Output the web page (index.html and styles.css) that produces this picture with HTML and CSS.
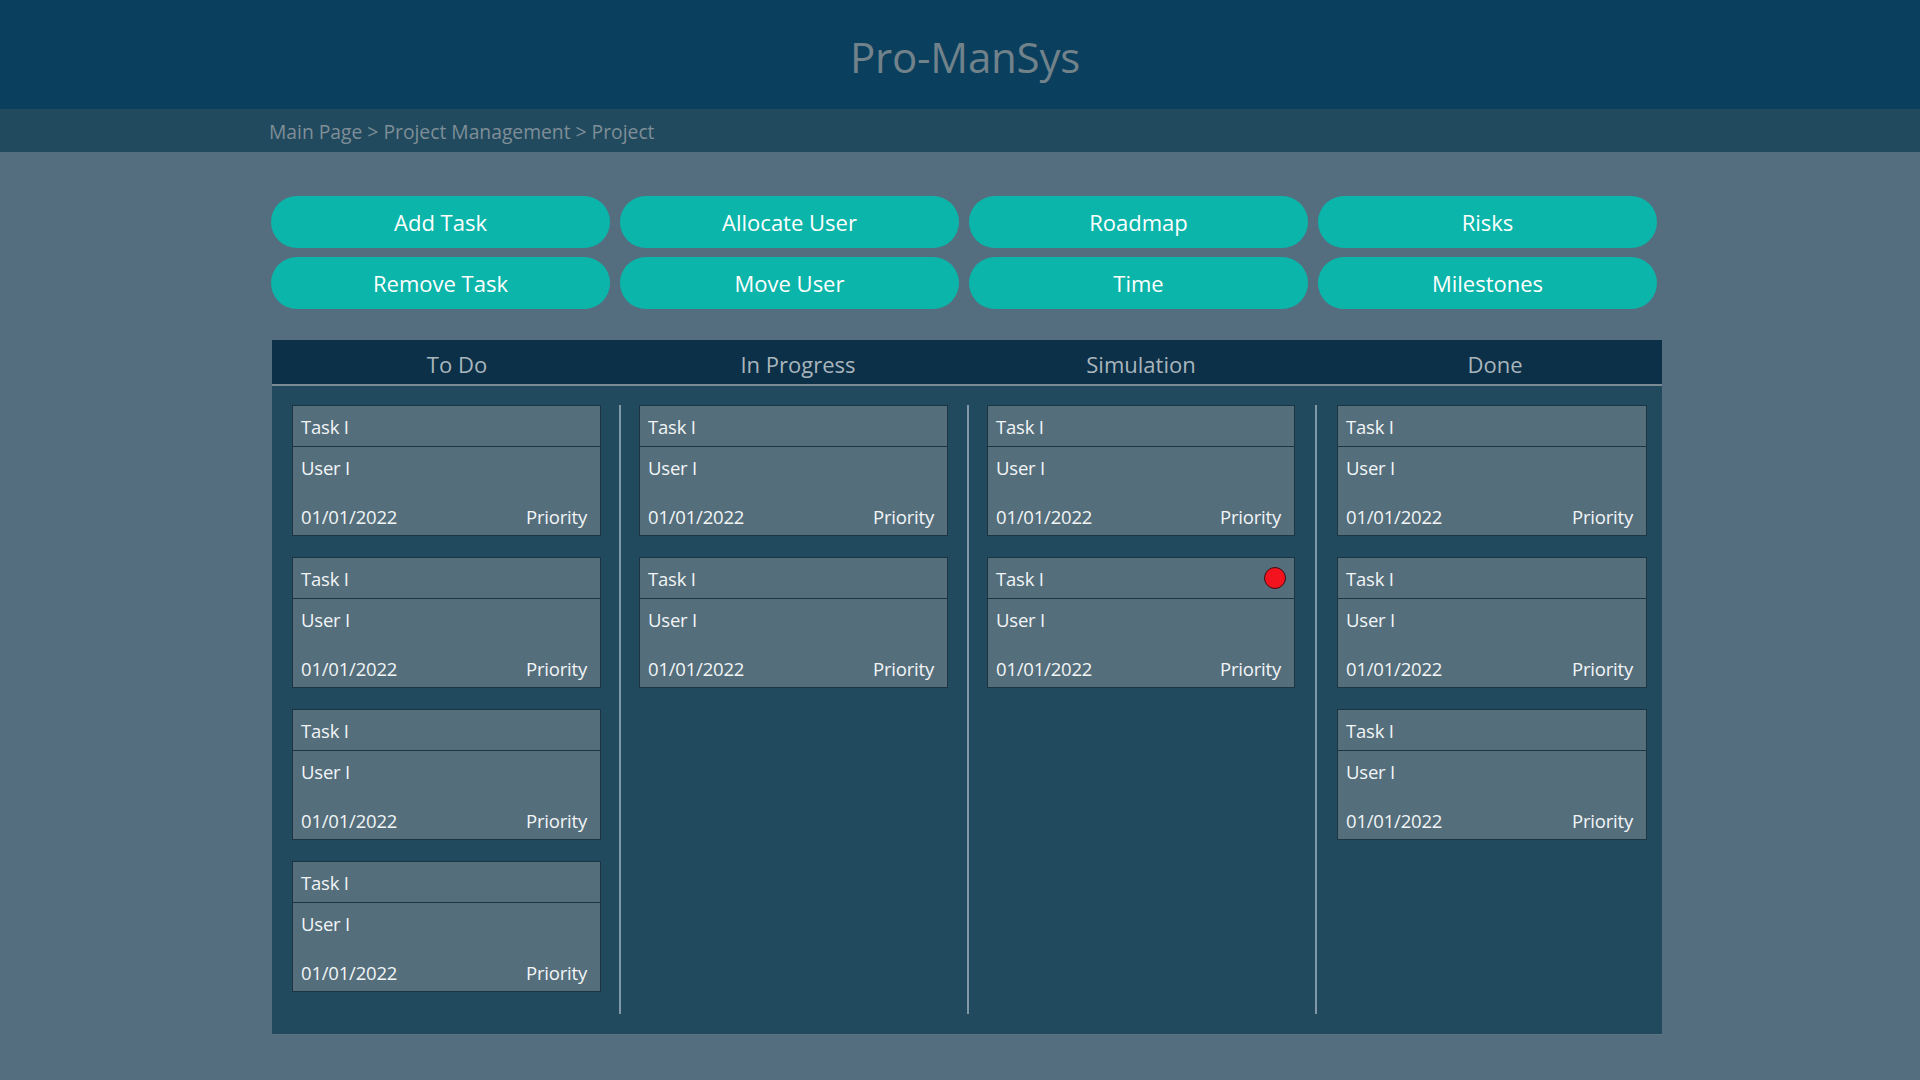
FILE: index.html
```html
<!DOCTYPE html>
<html lang="en">
<head>
<meta charset="utf-8">
<title>Pro-ManSys</title>
<link rel="stylesheet" href="styles.css">
</head>
<body>
<header class="top">
  <h1 class="brand">Pro-ManSys</h1>
</header>
<nav class="crumbs">Main Page &gt; Project Management &gt; Project</nav>
<main class="main">
  <div class="actions">
    <button class="btn">Add Task</button>
    <button class="btn">Allocate User</button>
    <button class="btn">Roadmap</button>
    <button class="btn">Risks</button>
    <button class="btn">Remove Task</button>
    <button class="btn">Move User</button>
    <button class="btn">Time</button>
    <button class="btn">Milestones</button>
  </div>
  <section class="board">
    <div class="board-head">
      <div class="col-title">To Do</div>
      <div class="col-title">In Progress</div>
      <div class="col-title">Simulation</div>
      <div class="col-title">Done</div>
    </div>
    <div class="board-body">
      <div class="col">
        <div class="card"><div class="card-title"><span>Task I</span></div><div class="card-body"><div>User I</div><div class="card-foot"><span>01/01/2022</span><span>Priority</span></div></div></div>
        <div class="card"><div class="card-title"><span>Task I</span></div><div class="card-body"><div>User I</div><div class="card-foot"><span>01/01/2022</span><span>Priority</span></div></div></div>
        <div class="card"><div class="card-title"><span>Task I</span></div><div class="card-body"><div>User I</div><div class="card-foot"><span>01/01/2022</span><span>Priority</span></div></div></div>
        <div class="card"><div class="card-title"><span>Task I</span></div><div class="card-body"><div>User I</div><div class="card-foot"><span>01/01/2022</span><span>Priority</span></div></div></div>
      </div>
      <div class="divider"></div>
      <div class="col">
        <div class="card"><div class="card-title"><span>Task I</span></div><div class="card-body"><div>User I</div><div class="card-foot"><span>01/01/2022</span><span>Priority</span></div></div></div>
        <div class="card"><div class="card-title"><span>Task I</span></div><div class="card-body"><div>User I</div><div class="card-foot"><span>01/01/2022</span><span>Priority</span></div></div></div>
      </div>
      <div class="divider"></div>
      <div class="col">
        <div class="card"><div class="card-title"><span>Task I</span></div><div class="card-body"><div>User I</div><div class="card-foot"><span>01/01/2022</span><span>Priority</span></div></div></div>
        <div class="card"><div class="card-title"><span>Task I</span><span class="dot"></span></div><div class="card-body"><div>User I</div><div class="card-foot"><span>01/01/2022</span><span>Priority</span></div></div></div>
      </div>
      <div class="divider"></div>
      <div class="col">
        <div class="card"><div class="card-title"><span>Task I</span></div><div class="card-body"><div>User I</div><div class="card-foot"><span>01/01/2022</span><span>Priority</span></div></div></div>
        <div class="card"><div class="card-title"><span>Task I</span></div><div class="card-body"><div>User I</div><div class="card-foot"><span>01/01/2022</span><span>Priority</span></div></div></div>
        <div class="card"><div class="card-title"><span>Task I</span></div><div class="card-body"><div>User I</div><div class="card-foot"><span>01/01/2022</span><span>Priority</span></div></div></div>
      </div>
    </div>
  </section>
</main>
</body>
</html>
```
FILE: styles.css
```css
* { box-sizing: border-box; }
html, body { margin: 0; padding: 0; }
body {
  background: #546e80;
  font-family: "Open Sans", "Noto Sans", sans-serif;
  width: 1920px;
  min-height: 1080px;
}
.top {
  height: 109px;
  background: #0a405e;
  display: flex;
  align-items: center;
  justify-content: center;
}
.brand {
  margin: 0;
  font-weight: 400;
  font-size: 42px;
  color: #72828b;
  letter-spacing: -0.2px;
  transform: translate(5px, 2px);
}
.crumbs {
  height: 43px;
  background: #214a5e;
  padding-left: 269px;
  padding-top: 2px;
  display: flex;
  align-items: center;
  font-size: 19.3px;
  color: #7f8e97;
  letter-spacing: 0;
}
.main {
  padding: 44px 0 0 271px;
}
.actions {
  display: grid;
  grid-template-columns: repeat(4, 339px);
  column-gap: 10px;
  row-gap: 9px;
}
.btn {
  height: 52px;
  border: none;
  border-radius: 26px;
  background: #0bb5aa;
  color: #ffffff;
  font-family: "Open Sans", "Noto Sans", sans-serif;
  font-size: 22px;
  padding: 0;
  letter-spacing: 0;
}
.board {
  margin-top: 31px;
  margin-left: 1px;
  width: 1390px;
  background: #214a5e;
  box-shadow: 0 1px 0 #5c7380;
}
.board-head {
  height: 46px;
  background: #0c3048;
  border-bottom: 2px solid #7a8a92;
  display: grid;
  grid-template-columns: 370px 312px 374px 334px;
  align-items: center;
  padding-top: 3px;
}
.col-title {
  text-align: center;
  color: #a9b5bc;
  font-size: 22px;
  letter-spacing: 0;
}
.board-body {
  display: grid;
  grid-template-columns: 309px 38px 309px 39px 308px 42px 310px;
  padding: 19px 15px 20px 20px;
  min-height: 648px;
}
.col {
  display: flex;
  flex-direction: column;
  gap: 21px;
}
.divider {
  width: 2px;
  justify-self: center;
  background: #8198a6;
}
.card {
  height: 131px;
  background: #546e7b;
  border: 1px solid #1d3441;
  color: #f2f5f7;
  font-size: 18.5px;
  display: flex;
  flex-direction: column;
}
.card-title {
  height: 41px;
  flex: none;
  border-bottom: 1px solid #1d3441;
  display: flex;
  align-items: center;
  justify-content: space-between;
  padding: 0 8px 0 8px;
  letter-spacing: -0.2px;
}
.dot {
  width: 22px;
  height: 22px;
  border-radius: 50%;
  background: #f3131f;
  border: 1px solid #3a1014;
}
.card-body {
  flex: 1;
  display: flex;
  flex-direction: column;
  justify-content: space-between;
  padding: 8px 13px 6px 8px;
  letter-spacing: -0.2px;
}
.card-foot {
  display: flex;
  justify-content: space-between;
}
```
